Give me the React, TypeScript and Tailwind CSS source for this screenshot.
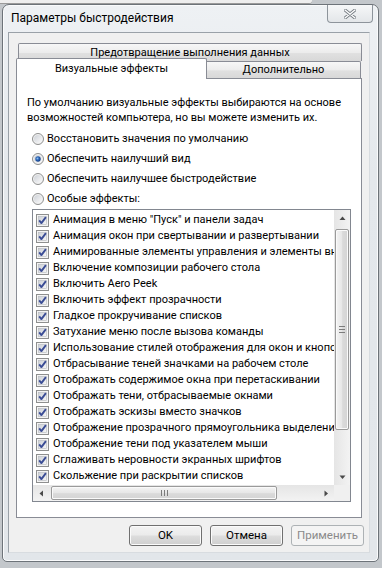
import React from 'react';

const effects = [
  'Анимация в меню "Пуск" и панели задач',
  'Анимация окон при свертывании и развертывании',
  'Анимированные элементы управления и элементы внутри окна',
  'Включение композиции рабочего стола',
  'Включить Aero Peek',
  'Включить эффект прозрачности',
  'Гладкое прокручивание списков',
  'Затухание меню после вызова команды',
  'Использование стилей отображения для окон и кнопок',
  'Отбрасывание теней значками на рабочем столе',
  'Отображать содержимое окна при перетаскивании',
  'Отображать тени, отбрасываемые окнами',
  'Отображать эскизы вместо значков',
  'Отображение прозрачного прямоугольника выделения',
  'Отображение тени под указателем мыши',
  'Сглаживать неровности экранных шрифтов',
  'Скольжение при раскрытии списков',
];

const radios = [
  { label: 'Восстановить значения по умолчанию', checked: false },
  { label: 'Обеспечить наилучший вид', checked: true },
  { label: 'Обеспечить наилучшее быстродействие', checked: false },
  { label: 'Особые эффекты:', checked: false },
];

const CheckBox = () => (
  <svg width="13" height="13" viewBox="0 0 13 13" className="shrink-0">
    <defs>
      <linearGradient id="cbFill" x1="0" y1="0" x2="1" y2="1">
        <stop offset="0" stopColor="#cdd1d7" />
        <stop offset="1" stopColor="#f7f7f7" />
      </linearGradient>
    </defs>
    <rect x="0.5" y="0.5" width="12" height="12" fill="#f4f4f4" stroke="#8e8f8f" />
    <rect x="2.5" y="2.5" width="8" height="8" fill="url(#cbFill)" stroke="#b4b8bf" strokeWidth="0.6" />
    <path d="M3.2 6.4 L5.4 9.1 L9.9 3.2" fill="none" stroke="#3a4c95" strokeWidth="1.9" strokeLinejoin="round" />
  </svg>
);

const Radio = ({ checked }: { checked: boolean }) => (
  <svg width="12" height="12" viewBox="0 0 12 12" className="shrink-0">
    <defs>
      <linearGradient id="rbFill" x1="0" y1="0" x2="1" y2="1">
        <stop offset="0" stopColor="#cdd1d7" />
        <stop offset="1" stopColor="#fafafa" />
      </linearGradient>
      <radialGradient id="rbDot" cx="0.4" cy="0.4" r="0.6">
        <stop offset="0" stopColor="#8fc0f0" />
        <stop offset="0.5" stopColor="#2a64b5" />
        <stop offset="1" stopColor="#153e86" />
      </radialGradient>
    </defs>
    <circle cx="6" cy="6" r="5.5" fill="#f2f2f2" stroke="#8e8f8f" />
    <circle cx="6" cy="6" r="4" fill="url(#rbFill)" />
    {checked && <circle cx="6" cy="6" r="2.7" fill="url(#rbDot)" />}
  </svg>
);

const Arrow = ({ dir }: { dir: 'up' | 'down' | 'left' | 'right' }) => {
  const pts = {
    up: '0.5,4 3.5,0.5 6.5,4',
    down: '0.5,0.5 3.5,4 6.5,0.5',
    left: '4,0.5 0.5,3.5 4,6.5',
    right: '0.5,0.5 4,3.5 0.5,6.5',
  }[dir];
  const vertical = dir === 'up' || dir === 'down';
  return (
    <svg width={vertical ? 7 : 5} height={vertical ? 5 : 7} viewBox={vertical ? '0 0 7 5' : '0 0 5 7'}>
      <polygon points={pts} fill="#4a4a4a" />
    </svg>
  );
};

const Button = ({ label, disabled }: { label: string; disabled?: boolean }) =>
  disabled ? (
    <div className="w-[73px] h-[21px] rounded-[3px] border border-[#adb2b5] bg-[#f4f4f4] text-[#8a8a8a] flex items-center justify-center text-[11.5px]">
      {label}
    </div>
  ) : (
    <div className="w-[73px] h-[21px] rounded-[3px] border border-[#707070] bg-[linear-gradient(to_bottom,#f3f3f3_0%,#ebebeb_48%,#dddddd_52%,#cfcfcf_100%)] shadow-[inset_0_0_0_1px_#fbfbfb] text-black flex items-center justify-center text-[11.5px]">
      {label}
    </div>
  );

export default function App() {
  return (
    <div className="w-[382px] h-[568px] overflow-hidden bg-[#c3c7cb] font-['Roboto',sans-serif] pl-[2px] pt-[4px] relative">
      {/* window behind, peeking at the top */}
      <div className="absolute left-0 top-0 w-[312px] h-[4px] bg-[#eeeeee] border-b border-[#9a9a9a] rounded-br-[3px]" />

      {/* dialog */}
      <div className="relative w-[377px] h-[558px] rounded-t-[7px] rounded-b-[5px] border border-[#6d7379] bg-[linear-gradient(to_bottom,#eef1f4,#e4e8ec_30%,#e2e6ea)] shadow-[inset_0_0_0_1px_#fafbfc] flex flex-col">
        {/* title bar */}
        <div className="h-[27px] flex justify-between items-start pl-[8px] pr-[5px]">
          <div className="text-[12px] leading-[16px] pt-[5px] text-black whitespace-nowrap">Параметры быстродействия</div>
          <div className="w-[46px] h-[18px] rounded-b-[4px] border border-t-0 border-[#8d949b] bg-[linear-gradient(to_bottom,#f6f7f8,#e3e6e9)] flex items-center justify-center">
            <svg width="12" height="10" viewBox="0 0 12 10">
              <path d="M1 1 L11 9 M11 1 L1 9" stroke="#777d84" strokeWidth="3.2" strokeLinecap="round" />
              <path d="M1 1 L11 9 M11 1 L1 9" stroke="#ffffff" strokeWidth="1.4" strokeLinecap="round" />
            </svg>
          </div>
        </div>

        {/* client area */}
        <div className="ml-[5px] w-[362px] h-[521px] border border-[#9aa1a8] border-r-[#d8dce0] border-b-[#d8dce0] bg-[#f0f0f0] pl-[7px] pt-[10px] flex flex-col">
          {/* tab strip */}
          <div className="w-[346px] flex flex-col text-[11px]">
            <div className="ml-[2px] w-[344px] h-[18px] border border-b-0 border-[#898c95] rounded-t-[2px] bg-[linear-gradient(to_bottom,#f7f7f7,#ececec_50%,#e0e0e0_55%,#d8d8d8)] leading-[16px] text-center pt-[1px] whitespace-nowrap">
              Предотвращение выполнения данных
            </div>
            <div className="relative z-10 -mt-[3px] h-[20px] flex items-end">
              <div className="w-[191px] h-[21px] -mb-[1px] bg-white border border-b-0 border-[#898c95] rounded-t-[2px] leading-[16px] text-center pt-[2px] whitespace-nowrap">
                Визуальные эффекты
              </div>
              <div className="w-[154px] h-[17px] border-t border-r border-[#898c95] rounded-tr-[2px] bg-[linear-gradient(to_bottom,#f7f7f7,#ececec_50%,#e0e0e0_55%,#d8d8d8)] leading-[16px] text-center whitespace-nowrap">
                Дополнительно
              </div>
            </div>
          </div>

          {/* tab page */}
          <div className="w-[346px] h-[440px] border border-[#898c95] bg-white text-[11px] text-black">
            <p className="pl-[10px] pt-[16px] leading-[15px] whitespace-nowrap">
              По умолчанию визуальные эффекты выбираются на основе
              <br />
              возможностей компьютера, но вы можете изменить их.
            </p>

            <div className="mt-[4px] flex flex-col">
              {radios.map((r) => (
                <div key={r.label} className="h-[20px] pl-[15px] flex items-center gap-[3px] leading-[16px] whitespace-nowrap">
                  <Radio checked={r.checked} />
                  <span>{r.label}</span>
                </div>
              ))}
            </div>

            {/* effects list */}
            <div className="ml-[15px] w-[319px] h-[293px] border border-[#828790] flex flex-col">
              <div className="h-[275px] flex">
                <div className="w-[301px] overflow-hidden pt-[2px]">
                  {effects.map((e) => (
                    <div key={e} className="h-[16px] pl-[3px] flex items-center gap-[4px] whitespace-nowrap leading-[16px]">
                      <CheckBox />
                      <span>{e}</span>
                    </div>
                  ))}
                </div>
                {/* vertical scrollbar */}
                <div className="w-[16px] bg-[linear-gradient(to_right,#e5e5e5,#f3f3f3)] flex flex-col items-center">
                  <div className="h-[16px] flex items-center justify-center">
                    <Arrow dir="up" />
                  </div>
                  <div className="mt-[3px] w-[14px] h-[201px] rounded-[2px] border border-[#9a9a9a] bg-[linear-gradient(to_right,#f4f4f4,#e6e6e6_50%,#dadada_55%,#d4d4d4)] shadow-[inset_0_0_0_1px_#fafafa] flex flex-col items-center justify-center gap-[2px]">
                    <div className="w-[6px] h-[1px] bg-[#7c7c7c]" />
                    <div className="w-[6px] h-[1px] bg-[#7c7c7c]" />
                    <div className="w-[6px] h-[1px] bg-[#7c7c7c]" />
                  </div>
                  <div className="flex-1" />
                  <div className="h-[16px] flex items-center justify-center">
                    <Arrow dir="down" />
                  </div>
                </div>
              </div>
              {/* horizontal scrollbar */}
              <div className="h-[16px] flex">
                <div className="w-[301px] bg-[linear-gradient(to_bottom,#e5e5e5,#f3f3f3)] flex items-center">
                  <div className="w-[16px] flex items-center justify-center">
                    <Arrow dir="left" />
                  </div>
                  <div className="ml-[2px] w-[226px] h-[14px] rounded-[2px] border border-[#9a9a9a] bg-[linear-gradient(to_bottom,#f4f4f4,#e6e6e6_50%,#dadada_55%,#d4d4d4)] shadow-[inset_0_0_0_1px_#fafafa] flex items-center justify-center gap-[2px]">
                    <div className="w-[1px] h-[6px] bg-[#7c7c7c]" />
                    <div className="w-[1px] h-[6px] bg-[#7c7c7c]" />
                    <div className="w-[1px] h-[6px] bg-[#7c7c7c]" />
                  </div>
                  <div className="flex-1" />
                  <div className="w-[16px] flex items-center justify-center">
                    <Arrow dir="right" />
                  </div>
                </div>
                <div className="w-[16px] bg-[#f0f0f0]" />
              </div>
            </div>
          </div>

          {/* buttons */}
          <div className="mt-[7px] pr-[5px] flex justify-end gap-[8px]">
            <Button label="OK" />
            <Button label="Отмена" />
            <Button label="Применить" disabled />
          </div>
        </div>
      </div>
    </div>
  );
}
